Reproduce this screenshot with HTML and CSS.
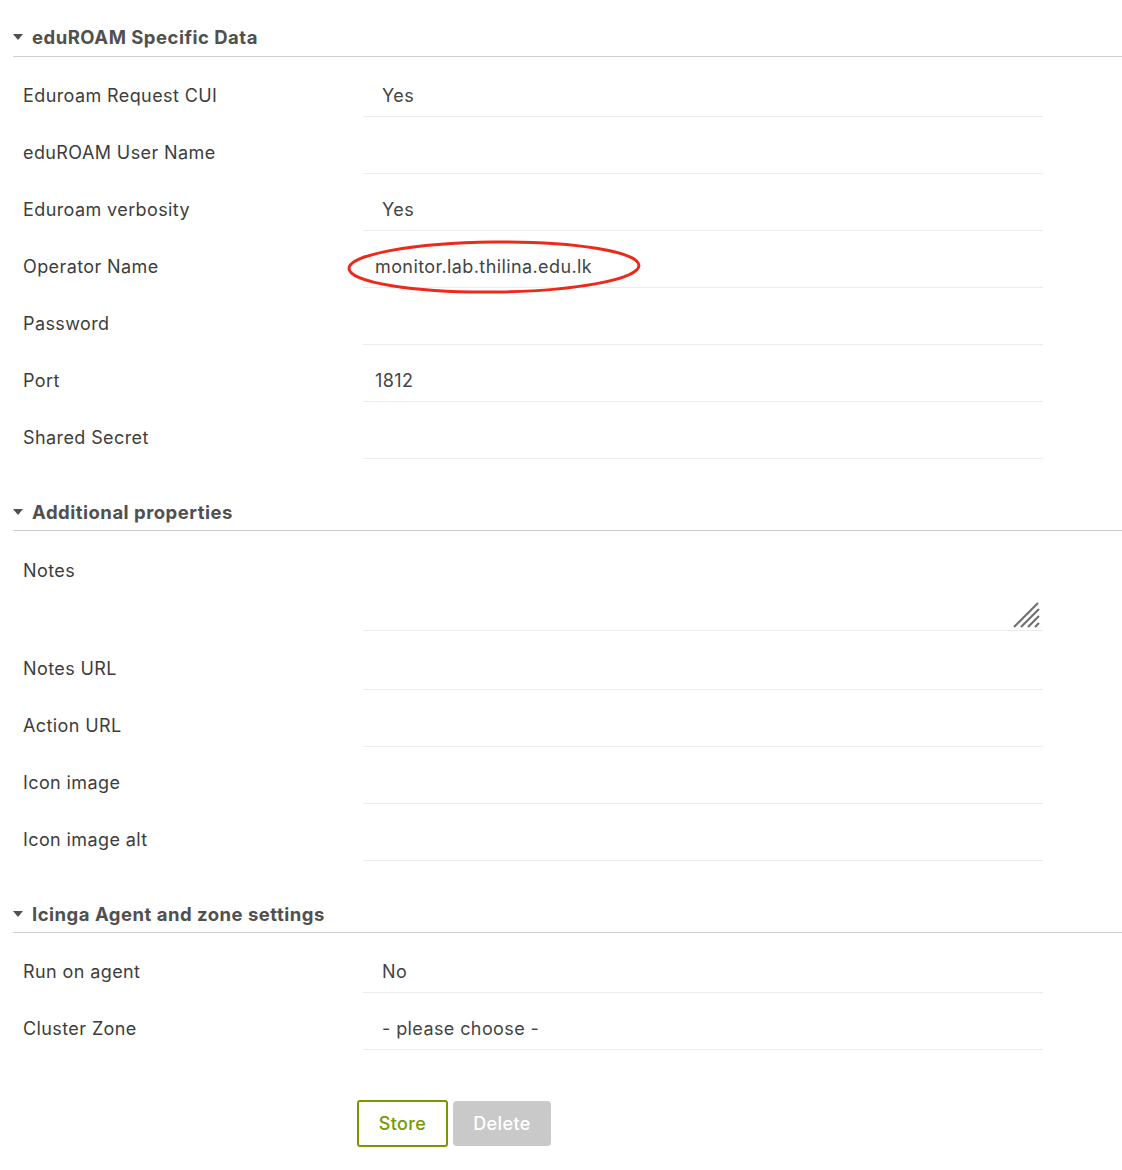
FILE: index.html
```html
<!DOCTYPE html>
<html>
<head>
<meta charset="utf-8">
<link rel="stylesheet" href="styles.css">
</head>
<body>
<form class="form">
  <section class="section">
    <h3 class="section-head section-head--first"><span class="caret"></span>eduROAM Specific Data</h3>
    <div class="row"><div class="label">Eduroam Request CUI</div><div class="field field--select">Yes</div></div>
    <div class="row"><div class="label">eduROAM User Name</div><div class="field"></div></div>
    <div class="row"><div class="label">Eduroam verbosity</div><div class="field field--select">Yes</div></div>
    <div class="row"><div class="label">Operator Name</div><div class="field field--marked">monitor.lab.thilina.edu.lk<svg class="ellipse" width="296" height="58" viewBox="0 0 296 58"><ellipse cx="147" cy="28" rx="145" ry="25" fill="none" stroke="#ec2a1c" stroke-width="3" transform="rotate(-0.6 147 28)"/></svg></div></div>
    <div class="row"><div class="label">Password</div><div class="field"></div></div>
    <div class="row"><div class="label">Port</div><div class="field">1812</div></div>
    <div class="row"><div class="label">Shared Secret</div><div class="field"></div></div>
  </section>
  <section class="section">
    <h3 class="section-head"><span class="caret"></span>Additional properties</h3>
    <div class="row row--textarea"><div class="label">Notes</div><div class="field field--textarea"><svg class="grip" width="28" height="28" viewBox="0 0 28 28"><g stroke="#6f6f6f" stroke-width="2.2"><line x1="1" y1="26" x2="25" y2="2"/><line x1="8" y1="26" x2="26" y2="8"/><line x1="15" y1="26" x2="26" y2="15"/><line x1="22" y1="26" x2="26" y2="22"/></g></svg></div></div>
    <div class="row"><div class="label">Notes URL</div><div class="field"></div></div>
    <div class="row"><div class="label">Action URL</div><div class="field"></div></div>
    <div class="row"><div class="label">Icon image</div><div class="field"></div></div>
    <div class="row"><div class="label">Icon image alt</div><div class="field"></div></div>
  </section>
  <section class="section">
    <h3 class="section-head"><span class="caret"></span>Icinga Agent and zone settings</h3>
    <div class="row"><div class="label">Run on agent</div><div class="field field--select">No</div></div>
    <div class="row"><div class="label">Cluster Zone</div><div class="field field--select">- please choose -</div></div>
  </section>
  <div class="actions">
    <button type="button" class="btn btn--store">Store</button>
    <button type="button" class="btn btn--delete">Delete</button>
  </div>
</form>
</body>
</html>
```
FILE: styles.css
```css
html, body {
  margin: 0;
  padding: 0;
  background: #fff;
}
body {
  font-family: Inter, "Liberation Sans", Arial, sans-serif;
  font-size: 18px;
  letter-spacing: 0.4px;
  color: #434343;
  width: 1122px;
}
.form {
  padding-left: 13px;
}
.section-head {
  margin: 0 0 3px 0;
  padding: 41px 0 6px 0;
  line-height: 24px;
  font-size: 18.5px;
  letter-spacing: 0.5px;
  font-weight: 700;
  color: #505050;
  border-bottom: 1px solid #cfcfcf;
  display: flex;
  align-items: center;
}
.section-head--first {
  padding-top: 25px;
  padding-bottom: 7px;
}
.caret {
  width: 0;
  height: 0;
  border-left: 5px solid transparent;
  border-right: 5px solid transparent;
  border-top: 6px solid #505050;
  margin-right: 9px;
  margin-top: 0;
}
.row {
  display: grid;
  grid-template-columns: 350px 680px;
}
.label {
  padding: 25px 0 9px 10px;
  line-height: 22px;
  color: #3d3d3d;
}
.field {
  position: relative;
  padding: 25px 0 9px 12px;
  line-height: 22px;
  min-height: 22px;
  border-bottom: 1px solid #ececec;
  color: #444;
}
.field--select {
  padding-left: 19px;
}
.ellipse {
  position: absolute;
  left: -16px;
  top: 8px;
}
.row--textarea {
  margin-bottom: 2px;
}
.row--textarea .label {
  padding-top: 26px;
}
.field--textarea {
  height: 96px;
  padding: 0;
  min-height: 0;
}
.grip {
  position: absolute;
  right: 2px;
  bottom: 1px;
}
.actions {
  margin-top: 50px;
  padding-left: 344px;
  display: flex;
  align-items: center;
  gap: 5px;
}
.btn {
  font-family: Inter, "Liberation Sans", Arial, sans-serif;
  font-size: 18px;
  letter-spacing: 0.4px;
  font-weight: 500;
  border-radius: 3px;
  padding: 0;
  cursor: pointer;
}
.btn--store {
  width: 91px;
  height: 47px;
  border: 2px solid #779900;
  background: #fff;
  color: #779900;
}
.btn--delete {
  width: 98px;
  height: 45px;
  border: 0;
  background: #c9c9c9;
  color: #fff;
  border-radius: 4px;
}
```
